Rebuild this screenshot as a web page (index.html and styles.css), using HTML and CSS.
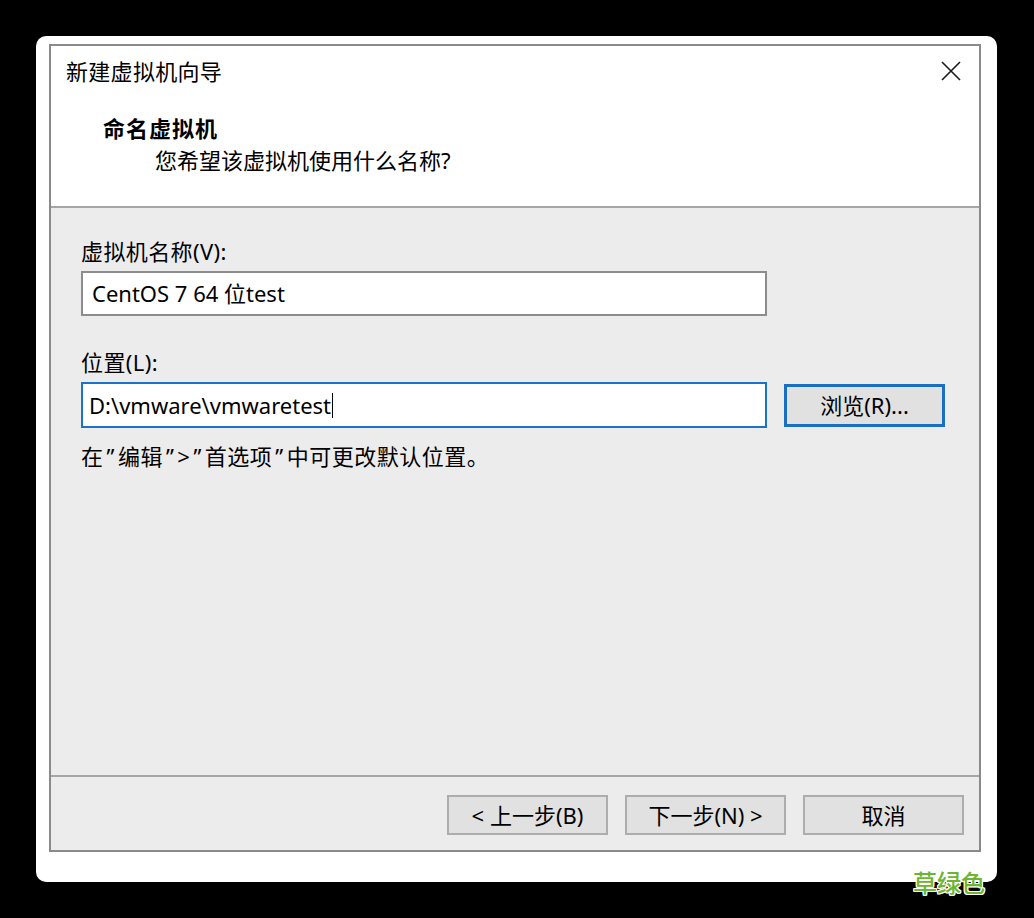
FILE: index.html
```html
<!DOCTYPE html>
<html lang="zh-CN">
<head>
<meta charset="utf-8">
<title>新建虚拟机向导</title>
<link rel="stylesheet" href="styles.css">
</head>
<body>
<div class="card">
  <div class="dialog">
    <div class="header">
      <div class="titlebar">
        <span class="title">新建虚拟机向导</span>
        <svg class="close" width="22" height="22" viewBox="0 0 22 22" aria-hidden="true">
          <path d="M2 2 L20 20 M20 2 L2 20" stroke="#1a1a1a" stroke-width="1.6" fill="none"/>
        </svg>
      </div>
      <div class="heading">命名虚拟机</div>
      <div class="subheading">您希望该虚拟机使用什么名称?</div>
    </div>
    <div class="body">
      <div class="label">虚拟机名称(V):</div>
      <div class="field">CentOS 7 64 位test</div>
      <div class="label label-second">位置(L):</div>
      <div class="row">
        <div class="field field-focus">D:\vmware\vmwaretest<span class="caret"></span></div>
        <div class="btn btn-default">浏览(R)...</div>
      </div>
      <div class="hint">在<span class="q">”</span>编辑<span class="q">”</span>&gt;<span class="q">”</span>首选项<span class="q">”</span>中可更改默认位置。</div>
    </div>
    <div class="footer">
      <div class="btn">&lt; 上一步(B)</div>
      <div class="btn">下一步(N) &gt;</div>
      <div class="btn">取消</div>
    </div>
  </div>
  <div class="watermark">草绿色</div>
</div>
</body>
</html>
```
FILE: styles.css
```css
html, body {
  margin: 0;
  padding: 0;
}
body {
  background: #000;
  width: 1034px;
  height: 918px;
  overflow: hidden;
  font-family: "Noto Sans", "Noto Sans CJK SC", sans-serif;
  font-size: 22px;
  color: #000;
}
.card {
  position: relative;
  margin: 36px 0 0 36px;
  width: 961px;
  height: 846px;
  background: #fff;
  border-radius: 10px;
  padding: 8px 0 0 13px;
  box-sizing: border-box;
}
.dialog {
  width: 932px;
  height: 808px;
  border: 2px solid #8a8a8a;
  box-sizing: border-box;
  display: flex;
  flex-direction: column;
  background: #ececec;
}
.header {
  height: 160px;
  background: #fff;
  border-bottom: 2px solid #a6a6a6;
  flex: none;
}
.titlebar {
  display: flex;
  justify-content: space-between;
  align-items: center;
  margin-top: 10px;
  height: 30px;
  padding: 0 17px 0 15px;
}
.title {
  line-height: 30px;
  letter-spacing: 0.3px;
}
.close {
  display: block;
}
.heading {
  margin: 27px 0 0 52px;
  line-height: 30px;
  font-weight: 700;
  letter-spacing: 1px;
}
.subheading {
  margin: 2px 0 0 104px;
  line-height: 30px;
}
.body {
  flex: 1;
  padding: 28px 0 0 30px;
}
.label {
  line-height: 30px;
  letter-spacing: 0.4px;
}
.label-second {
  margin-top: 31px;
}
.field {
  margin-top: 5px;
  width: 686px;
  height: 45px;
  box-sizing: border-box;
  background: #fff;
  border: 2px solid #8c8c8c;
  padding: 0 9px;
  line-height: 41px;
  display: flex;
  align-items: center;
}
.field-focus {
  border-color: #1a73c8;
  height: 46px;
  padding-left: 6px;
}
.caret {
  display: inline-block;
  width: 0;
  height: 25px;
  border-left: 1.5px solid #000;
  margin-left: 1px;
}
.row {
  display: flex;
  align-items: center;
  gap: 17px;
}
.row .field {
  margin-top: 5px;
}
.btn {
  width: 161px;
  height: 40px;
  box-sizing: border-box;
  background: #e1e1e1;
  border: 2px solid #adadad;
  display: flex;
  align-items: center;
  justify-content: center;
  line-height: 1;
}
.btn-default {
  margin-top: 5px;
  height: 43px;
  border: 3px solid #1a6fc2;
}
.hint {
  margin-top: 13px;
  line-height: 30px;
  letter-spacing: 0.5px;
}
.q {
  padding: 0 3px;
}
.footer {
  flex: none;
  height: 75px;
  box-sizing: border-box;
  border-top: 2px solid #a6a6a6;
  display: flex;
  justify-content: flex-end;
  align-items: flex-start;
  padding: 18px 15px 0 0;
  gap: 17px;
}
.footer .btn {
  height: 40px;
}
.watermark {
  position: absolute;
  right: 12px;
  bottom: -14px;
  font-family: "Noto Sans CJK SC", sans-serif;
  font-size: 24px;
  line-height: 28px;
  color: #6db52f;
  font-weight: 500;
  text-shadow: -1px -1px 0 #fff, 1px -1px 0 #fff, -1px 1px 0 #fff, 1px 1px 0 #fff, 0 1px 0 #fff, 0 -1px 0 #fff, 1px 0 0 #fff, -1px 0 0 #fff;
}
```
